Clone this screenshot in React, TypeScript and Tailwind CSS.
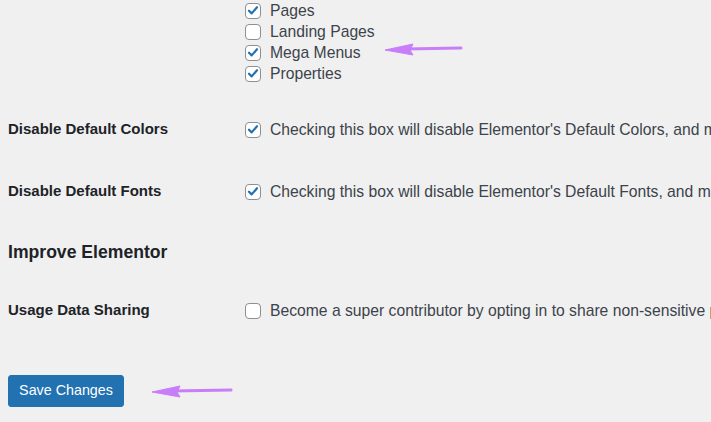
import React from "react";

const Box = ({ checked }: { checked?: boolean }) => (
  <span className="flex h-4 w-4 shrink-0 items-center justify-center rounded-[4px] border border-[#8c8f94] bg-white">
    {checked && (
      <svg viewBox="0 0 16 16" className="h-[15px] w-[15px]">
        <path d="M3.4 8.2 L6.5 11.3 L12.6 4.3" fill="none" stroke="#2271b1" strokeWidth="2.5" strokeLinecap="round" strokeLinejoin="round" />
      </svg>
    )}
  </span>
);

const Option = ({ checked, children }: { checked?: boolean; children: React.ReactNode }) => (
  <label className="flex h-[21px] items-center gap-[9px] whitespace-nowrap text-[15.7px] text-[#3c434a]">
    <Box checked={checked} />
    <span>{children}</span>
  </label>
);

const Row = ({ label, children, className = "" }: { label: string; children: React.ReactNode; className?: string }) => (
  <div className={`flex h-[21px] items-center ${className}`}>
    <div className="w-[237px] shrink-0 text-[15px] font-bold text-[#1d2327]">{label}</div>
    {children}
  </div>
);

const Arrow = ({ x1, x2, y }: { x1: number; x2: number; y: number }) => (
  <g fill="#c97ef9" stroke="#c97ef9">
    <line x1={x2} y1={y - 1} x2={x1 + 20} y2={y} strokeWidth="3" strokeLinecap="round" />
    <path d={`M${x1} ${y + 1} L${x1 + 28} ${y - 5} L${x1 + 25} ${y + 1} L${x1 + 28} ${y + 6} Z`} strokeWidth="1" strokeLinejoin="round" />
  </g>
);

export default function App() {
  return (
    <div className="relative h-[422px] w-[711px] overflow-hidden bg-[#f0f0f1] px-2 font-['Liberation_Sans',Arial,sans-serif]">
      <div className="mt-[-21px] flex">
        <div className="mt-[2px] w-[237px] shrink-0 text-[15px] font-bold text-[#1d2327]">Post Types</div>
        <div className="flex flex-col">
          <Option checked>Posts</Option>
          <Option checked>Pages</Option>
          <Option>Landing Pages</Option>
          <Option checked>Mega Menus</Option>
          <Option checked>Properties</Option>
        </div>
      </div>

      <Row label="Disable Default Colors" className="mt-[35px]">
        <Option checked>Checking this box will disable Elementor's Default Colors, and make Elementor inherit the colors from your theme.</Option>
      </Row>

      <Row label="Disable Default Fonts" className="mt-[41px]">
        <Option checked>Checking this box will disable Elementor's Default Fonts, and make Elementor inherit the fonts from your theme.</Option>
      </Row>

      <h2 className="mt-[38px] flex h-[24px] items-center text-[17.6px] font-bold text-[#1d2327]">Improve Elementor</h2>

      <Row label="Usage Data Sharing" className="mt-[36px]">
        <Option>Become a super contributor by opting in to share non-sensitive plugin data and to receive periodic email updates.</Option>
      </Row>

      <button className="mt-[54px] flex h-[32px] w-[116px] items-center justify-center rounded-[3px] border border-[#2271b1] bg-[#2271b1] text-[14.3px] text-white">
        Save Changes
      </button>

      <svg className="pointer-events-none absolute left-0 top-0" width="711" height="422">
        <Arrow x1={385} x2={461} y={49} />
        <Arrow x1={152} x2={231} y={391} />
      </svg>
    </div>
  );
}
